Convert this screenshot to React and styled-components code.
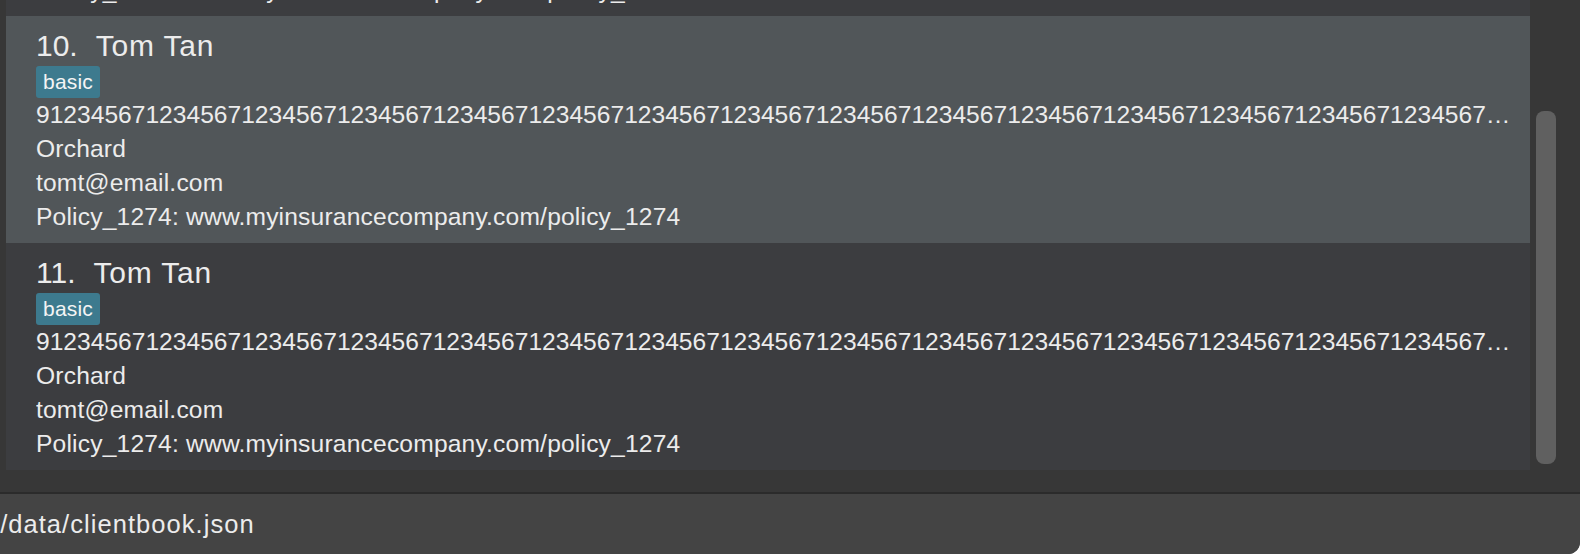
import React from 'react';
import styled, { createGlobalStyle } from 'styled-components';

const GlobalStyle = createGlobalStyle`
  html, body {
    margin: 0;
    padding: 0;
    background: #ffffff;
  }

  body {
    font-family: 'Liberation Sans', Arial, sans-serif;
  }
`;

const Window = styled.div`
  width: 1580px;
  height: 554px;
  display: flex;
  flex-direction: column;
  background-color: #373737;
  border-bottom-right-radius: 12px;
  overflow: hidden;
  color: #ececec;
`;

const ListPane = styled.div`
  flex: 1;
  min-height: 0;
  display: flex;
  overflow: hidden;
`;

const ListViewport = styled.div`
  flex: 1;
  min-width: 0;
  padding-left: 6px;
  overflow: hidden;
`;

const CardStack = styled.div`
  display: flex;
  flex-direction: column;
  margin-top: -211px;
`;

const Card = styled.div`
  box-sizing: border-box;
  height: 227px;
  display: flex;
  flex-direction: column;
  padding: 12px 15px 9px 30px;
  background-color: ${({ selected }) => (selected ? '#515659' : '#3c3d40')};
`;

const NameRow = styled.div`
  display: flex;
  font-size: 30px;
  line-height: 36px;
  white-space: nowrap;
`;

const Index = styled.span`
  margin-right: 18px;
`;

const Name = styled.span`
  letter-spacing: 0.8px;
`;

const TagRow = styled.div`
  display: flex;
  gap: 6px;
  margin-top: 2px;
`;

const Tag = styled.span`
  height: 32px;
  padding: 0 7px;
  border-radius: 3px;
  background-color: #3d7a8e;
  color: #f4f4f4;
  font-size: 21px;
  letter-spacing: 0.2px;
  line-height: 32px;
`;

const Detail = styled.div`
  font-size: 24.6px;
  line-height: 34px;
  letter-spacing: ${({ numeric }) => (numeric ? '0' : '0.18px')};
  white-space: nowrap;
  overflow: hidden;
  text-overflow: ellipsis;
`;

const ScrollTrack = styled.div`
  width: 50px;
  flex-shrink: 0;
`;

const Thumb = styled.div`
  width: 20px;
  height: 353px;
  margin: 111px 0 0 6px;
  border-radius: 8px;
  background-color: #606060;
`;

const Divider = styled.div`
  height: 2px;
  flex-shrink: 0;
  background-color: #2b2b2b;
`;

const StatusBar = styled.div`
  height: 60px;
  flex-shrink: 0;
  padding-top: 7px;
  box-sizing: border-box;
  background-color: #444444;
  overflow: hidden;
`;

const StatusText = styled.div`
  margin-left: -8px;
  font-size: 25.5px;
  letter-spacing: 1.05px;
  line-height: 47px;
  white-space: nowrap;
`;

const phone = '9' + '1234567'.repeat(40);

const clients = [
  { index: 9, name: 'Tom Tan' },
  { index: 10, name: 'Tom Tan', selected: true },
  { index: 11, name: 'Tom Tan' },
].map((c) => ({
  ...c,
  tags: ['basic'],
  phone,
  address: 'Orchard',
  email: 'tomt@email.com',
  policy: 'Policy_1274: www.myinsurancecompany.com/policy_1274',
}));

const ClientCard = ({ client }) => (
  <Card selected={client.selected}>
    <NameRow>
      <Index>{`${client.index}.`}</Index>
      <Name>{client.name}</Name>
    </NameRow>
    <TagRow>
      {client.tags.map((tag) => (
        <Tag key={tag}>{tag}</Tag>
      ))}
    </TagRow>
    <Detail numeric>{client.phone}</Detail>
    <Detail>{client.address}</Detail>
    <Detail>{client.email}</Detail>
    <Detail>{client.policy}</Detail>
  </Card>
);

const App = () => (
  <>
    <GlobalStyle />
    <Window>
      <ListPane>
        <ListViewport>
          <CardStack>
            {clients.map((c) => (
              <ClientCard key={c.index} client={c} />
            ))}
          </CardStack>
        </ListViewport>
        <ScrollTrack>
          <Thumb />
        </ScrollTrack>
      </ListPane>
      <Divider />
      <StatusBar>
        <StatusText>./data/clientbook.json</StatusText>
      </StatusBar>
    </Window>
  </>
);

export default App;
